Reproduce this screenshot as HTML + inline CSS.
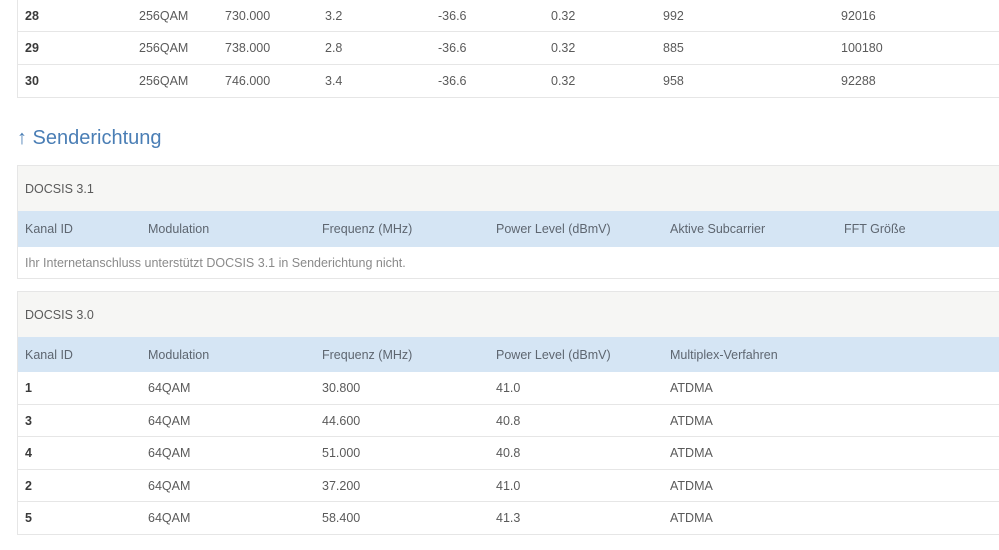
<!DOCTYPE html>
<html><head><meta charset="utf-8"><style>
*{margin:0;padding:0;box-sizing:border-box}
body{width:999px;height:550px;overflow:hidden;background:#fff;font-family:"Liberation Sans",sans-serif;font-size:12.5px;color:#5a5a5a;position:relative}
.box{position:absolute;left:17px;width:990px;border-left:1px solid #e6e6e6}
.row{position:relative;border-bottom:1px solid #e6e6e6}
.row span{position:absolute;top:50%;transform:translateY(-50%);white-space:nowrap}
.b{font-weight:bold;color:#3a3a3a}
.grey{background:#f6f6f4;border-top:1px solid #e6e6e6;border-bottom:none}
.blue{background:#d5e5f4;border-bottom:none;color:#5e6670}
h2{position:absolute;left:17px;top:127px;font-weight:normal;font-size:20px;color:#4a7eb5}
</style></head><body>
<div class="box" style="top:0">
<div class="row" style="height:32px"><span class="b" style="left:7px">28</span><span style="left:121px">256QAM</span><span style="left:207px">730.000</span><span style="left:307px">3.2</span><span style="left:420px">-36.6</span><span style="left:533px">0.32</span><span style="left:645px">992</span><span style="left:823px">92016</span></div>
<div class="row" style="height:33px"><span class="b" style="left:7px">29</span><span style="left:121px">256QAM</span><span style="left:207px">738.000</span><span style="left:307px">2.8</span><span style="left:420px">-36.6</span><span style="left:533px">0.32</span><span style="left:645px">885</span><span style="left:823px">100180</span></div>
<div class="row" style="height:33px"><span class="b" style="left:7px">30</span><span style="left:121px">256QAM</span><span style="left:207px">746.000</span><span style="left:307px">3.4</span><span style="left:420px">-36.6</span><span style="left:533px">0.32</span><span style="left:645px">958</span><span style="left:823px">92288</span></div>
</div>
<h2>↑ Senderichtung</h2>
<div class="box" style="top:165px">
<div class="row grey" style="height:46px"><span style="left:7px">DOCSIS 3.1</span></div>
<div class="row blue" style="height:36px"><span style="left:7px">Kanal ID</span><span style="left:130px">Modulation</span><span style="left:304px">Frequenz (MHz)</span><span style="left:478px">Power Level (dBmV)</span><span style="left:652px">Aktive Subcarrier</span><span style="left:826px">FFT Größe</span></div>
<div class="row" style="height:32px;color:#8a8a8a"><span style="left:7px">Ihr Internetanschluss unterstützt DOCSIS 3.1 in Senderichtung nicht.</span></div>
</div>
<div class="box" style="top:291px">
<div class="row grey" style="height:46px"><span style="left:7px">DOCSIS 3.0</span></div>
<div class="row blue" style="height:35px"><span style="left:7px">Kanal ID</span><span style="left:130px">Modulation</span><span style="left:304px">Frequenz (MHz)</span><span style="left:478px">Power Level (dBmV)</span><span style="left:652px">Multiplex-Verfahren</span></div>
<div class="row" style="height:33px"><span class="b" style="left:7px">1</span><span style="left:130px">64QAM</span><span style="left:304px">30.800</span><span style="left:478px">41.0</span><span style="left:652px">ATDMA</span></div>
<div class="row" style="height:32px"><span class="b" style="left:7px">3</span><span style="left:130px">64QAM</span><span style="left:304px">44.600</span><span style="left:478px">40.8</span><span style="left:652px">ATDMA</span></div>
<div class="row" style="height:33px"><span class="b" style="left:7px">4</span><span style="left:130px">64QAM</span><span style="left:304px">51.000</span><span style="left:478px">40.8</span><span style="left:652px">ATDMA</span></div>
<div class="row" style="height:32px"><span class="b" style="left:7px">2</span><span style="left:130px">64QAM</span><span style="left:304px">37.200</span><span style="left:478px">41.0</span><span style="left:652px">ATDMA</span></div>
<div class="row" style="height:33px"><span class="b" style="left:7px">5</span><span style="left:130px">64QAM</span><span style="left:304px">58.400</span><span style="left:478px">41.3</span><span style="left:652px">ATDMA</span></div>
</div>
</body></html>
